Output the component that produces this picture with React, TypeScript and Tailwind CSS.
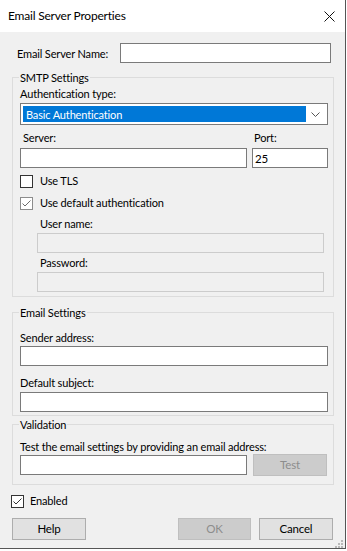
import React from 'react';

function CheckBox({ checked, tone = 'dark' }: { checked?: boolean; tone?: 'dark' | 'gray' }) {
  const border = tone === 'dark' ? 'border-[#333333]' : 'border-[#8c8c8c]';
  const stroke = tone === 'dark' ? '#333333' : '#6d6d6d';
  return (
    <span className={`w-[13px] h-[13px] border ${border} bg-white flex items-center justify-center shrink-0`}>
      {checked && (
        <svg width="11" height="11" viewBox="0 0 11 11">
          <path d="M1.5 5.5 L4 8 L9.5 2.5" fill="none" stroke={stroke} strokeWidth="1" />
        </svg>
      )}
    </span>
  );
}

function TextBox({ value = '', disabled, className = '' }: { value?: string; disabled?: boolean; className?: string }) {
  return (
    <input
      readOnly
      value={value}
      className={`h-[20px] border px-[2px] text-[11.5px] tracking-[-0.2px] outline-none ${
        disabled ? 'border-[#cccccc] bg-[#f0f0f0]' : 'border-[#7a7a7a] bg-white text-black'
      } ${className}`}
    />
  );
}

function Btn({ label, disabled, className = '' }: { label: string; disabled?: boolean; className?: string }) {
  return (
    <button
      className={`h-[22px] border text-[11.5px] tracking-[-0.2px] leading-none ${
        disabled ? 'bg-[#cccccc] border-[#bfbfbf] text-[#8d8d8d]' : 'bg-[#e1e1e1] border-[#adadad] text-black'
      } ${className}`}
    >
      {label}
    </button>
  );
}

function Group({ title, children, className = '' }: { title: string; children: React.ReactNode; className?: string }) {
  return (
    <fieldset className={`ml-[12px] w-[322px] border border-[#dcdcdc] pl-[7px] pr-[5px] ${className}`}>
      <legend className="-ml-[1px] px-[1px] leading-[15px]">{title}</legend>
      {children}
    </fieldset>
  );
}

export default function App() {
  return (
    <div className="w-[347px] h-[551px] bg-white overflow-hidden font-['Lato',sans-serif] text-[11px] tracking-[-0.15px] text-black">
      <div className="w-[346px] h-[549px] border-r border-b border-[#555555] bg-[#f0f0f0] flex flex-col">
        {/* title bar */}
        <div className="h-[32px] bg-white flex items-center justify-between pl-[8px] pr-[10px] shrink-0">
          <span className="text-[12px] tracking-[-0.2px]">Email Server Properties</span>
          <svg width="11" height="11" viewBox="0 0 11 11">
            <path d="M0.5 0.5 L10.5 10.5 M10.5 0.5 L0.5 10.5" stroke="#111" strokeWidth="1" />
          </svg>
        </div>

        {/* server name */}
        <div className="mt-[11px] flex items-center h-[20px]">
          <span className="ml-[17px] leading-[15px]">Email Server Name:</span>
          <TextBox className="ml-auto mr-[14px] w-[211px]" />
        </div>

        {/* SMTP */}
        <Group title="SMTP Settings" className="mt-[7px] pb-[4px]">
          <div className="mt-[1px] leading-[15px]">Authentication type:</div>
          <div className="mt-[2px] h-[22px] border border-[#7a7a7a] bg-white p-[2px] flex items-stretch">
            <div className="flex-1 bg-[#0078d7] text-white pl-[3px] flex items-center leading-none">Basic Authentication</div>
            <div className="w-[19px] flex items-center justify-center">
              <svg width="9" height="5" viewBox="0 0 9 5">
                <path d="M0.5 0.5 L4.5 4.5 L8.5 0.5" fill="none" stroke="#555" strokeWidth="1" />
              </svg>
            </div>
          </div>
          <div className="mt-[5px] flex leading-[15px]">
            <span className="ml-[3px]">Server:</span>
            <span className="ml-auto w-[75px] pl-[1px]">Port:</span>
          </div>
          <div className="mt-[3px] flex justify-between">
            <TextBox className="w-[227px]" />
            <TextBox className="w-[76px]" value="25" />
          </div>
          <div className="mt-[6px] flex items-center gap-[7px] h-[15px]">
            <CheckBox />
            <span>Use TLS</span>
          </div>
          <div className="mt-[7px] flex items-center gap-[7px] h-[15px]">
            <CheckBox checked tone="gray" />
            <span>Use default authentication</span>
          </div>
          <div className="pl-[17px] pr-[4px]">
            <div className="mt-[5px] leading-[15px] ml-[3px]">User name:</div>
            <TextBox disabled className="mt-[2px] w-full block" />
            <div className="mt-[2px] leading-[15px] ml-[3px]">Password:</div>
            <TextBox disabled className="mt-[2px] w-full block" />
          </div>
        </Group>

        {/* Email settings */}
        <Group title="Email Settings" className="mt-[8px] pb-[3px]">
          <div className="mt-[10px] leading-[15px]">Sender address:</div>
          <TextBox className="mt-[1px] w-full block" />
          <div className="mt-[9px] leading-[15px]">Default subject:</div>
          <TextBox className="mt-[2px] w-full block" />
        </Group>

        {/* Validation */}
        <Group title="Validation" className="mt-[1px] pb-[8px]">
          <div className="mt-[7px] leading-[15px]">Test the email settings by providing an email address:</div>
          <div className="flex items-center justify-between h-[22px]">
            <TextBox className="w-[227px] h-[19px]" />
            <Btn label="Test" disabled className="w-[74px] mr-[1px]" />
          </div>
        </Group>

        <div className="mt-[9px] ml-[11px] flex items-center gap-[6px] h-[15px]">
          <CheckBox checked />
          <span>Enabled</span>
        </div>

        <div className="mt-[9px] flex items-center">
          <Btn label="Help" className="ml-[12px] w-[74px]" />
          <Btn label="OK" disabled className="ml-auto w-[73px]" />
          <Btn label="Cancel" className="ml-[8px] mr-[12px] w-[74px]" />
        </div>

        <div className="mt-auto flex justify-end pr-[2px] pb-[2px]">
          <svg width="8" height="8" viewBox="0 0 8 8">
            <rect x="6" y="0" width="2" height="2" fill="#b8b8b8" />
            <rect x="3" y="3" width="2" height="2" fill="#b8b8b8" />
            <rect x="6" y="3" width="2" height="2" fill="#b8b8b8" />
            <rect x="0" y="6" width="2" height="2" fill="#b8b8b8" />
            <rect x="3" y="6" width="2" height="2" fill="#b8b8b8" />
            <rect x="6" y="6" width="2" height="2" fill="#b8b8b8" />
          </svg>
        </div>
      </div>
    </div>
  );
}
